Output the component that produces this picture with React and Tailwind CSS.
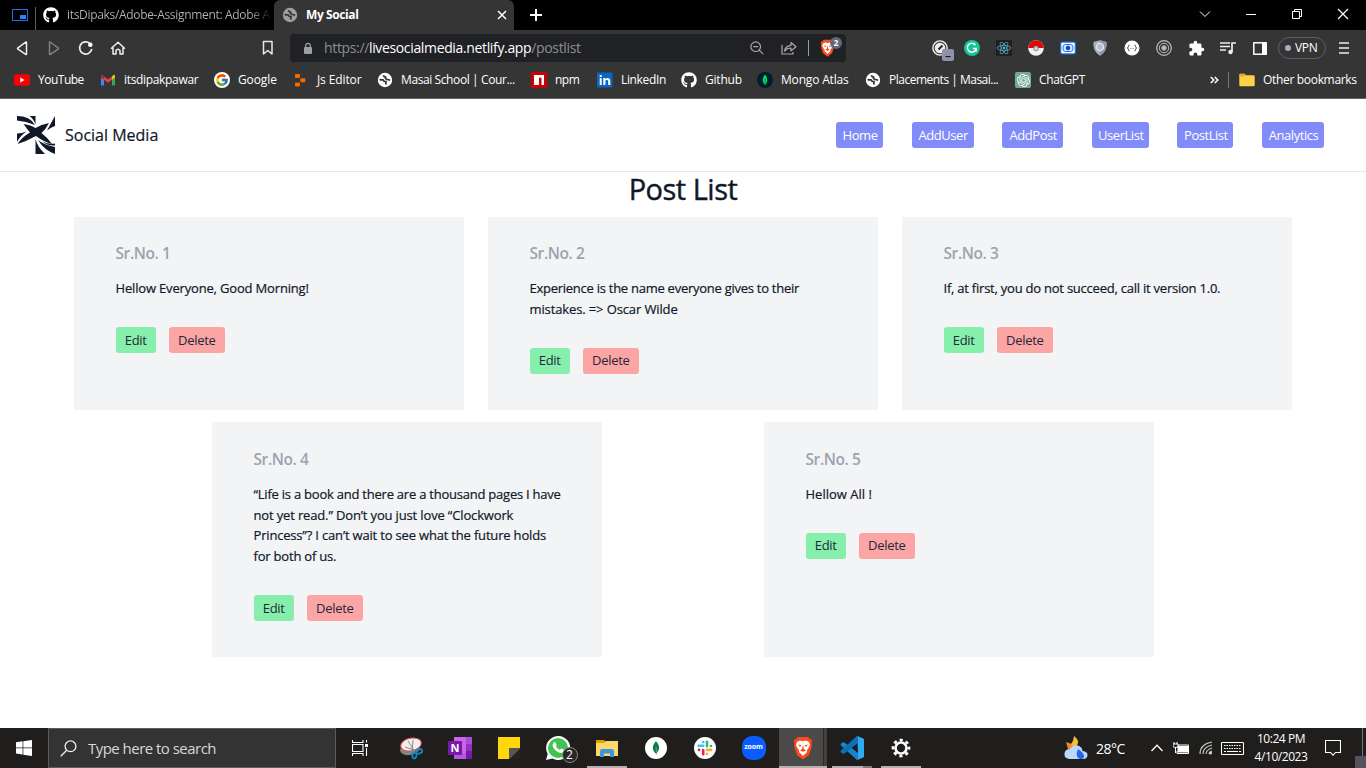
import React from "react";
import { FaGithub, FaReact, FaWhatsapp } from "react-icons/fa";
import { MdExtension } from "react-icons/md";
import { FcGoogle } from "react-icons/fc";
import { SiMongodb, SiOpenai } from "react-icons/si";

const Globe = ({ className, fg, bg }) => (
  <svg viewBox="0 0 16 16" className={className}>
    <circle cx="8" cy="8" r="7.2" fill={fg} />
    <path d="M2.600 7.200Q4 8.200 6 7.900Q6.800 9.800 9 9.700Q8.300 11.500 9.600 12.200" fill="none" stroke={bg} strokeWidth="1.700" />
    <path d="M6.500 3.200Q6.800 5.600 9.200 4.900Q7.400 6.300 9.800 7.300L13.200 8.200" fill="none" stroke={bg} strokeWidth="1.700" />
  </svg>
);

const BraveLion = ({ className }) => (
  <svg viewBox="0 0 20 24" className={className}>
    <path d="M5 1h10l2 2 2 1-.5 4 .5 2-3 9-6 4.500L4 19 1 10l.5-2L1 4l2-1z" fill="#fb4a1e" />
    <path d="M4 6l3-1.500 3 .8 3-.8L16 6l1 3-2 4-1 1v2l-4 4-4-4v-2l-1-1-2-4z" fill="#fff" />
    <path d="M5 8.500l3.500.8L7 11zM15 8.500l-3.500.8L13 11zM10 9l1 4 2 1.500-3 1.200-3-1.200L9 13z" fill="#fb4a1e" />
  </svg>
);

const YouTube = () => (
  <svg viewBox="0 0 16 16" className="size-4 shrink-0"><rect y="2.3" width="16" height="11.4" rx="3" fill="#f00" /><path d="M6.3 5.6v4.8L10.6 8z" fill="#fff" /></svg>
);
const Gmail = () => (
  <svg viewBox="0 0 16 16" className="size-4 shrink-0">
    <path d="M1 4v9.500h3V7z" fill="#4285f4" /><path d="M15 4v9.500h-3V7z" fill="#34a853" />
    <path d="M12 4.5v3.3L15 5.5V4q0-1.6-1.7-1z" fill="#fbbc04" /><path d="M4 4.5v3.3L1 5.5V4q0-1.6 1.7-1z" fill="#c5221f" />
    <path d="M4 4.400v3.400l4 3 4-3V4.400l-4 3z" fill="#ea4335" />
  </svg>
);
const GoogleIcon = () => (
  <span className="flex size-4 shrink-0 items-center justify-center rounded-full bg-white"><FcGoogle className="size-[14px]" /></span>
);
const JsEditor = () => (
  <svg viewBox="0 0 16 16" className="size-4 shrink-0" fill="#f56a00"><rect x="2" y="2" width="5" height="4" rx="1" /><rect x="7.3" y="6.2" width="5" height="4" rx="1" /><rect x="2" y="10.400" width="5" height="4" rx="1" /></svg>
);
const Npm = () => (
  <svg viewBox="0 0 16 16" className="size-4 shrink-0"><rect width="16" height="16" fill="#cb0000" /><path d="M3 3h10v10h-2.500V5.700H8V13H3z" fill="#fff" /></svg>
);
const LinkedIn = () => (
  <svg viewBox="0 0 16 16" className="size-4 shrink-0"><rect y=".5" width="15.500" height="15" rx="1" fill="#0a66c2" /><path d="M2.700 6h2v7h-2zM2.700 3h2v2h-2zM6.300 6h2v1q2.200-2.200 4.500 0 .5.800.5 2v4h-2.100V9.300q-.3-1.700-1.600-1.500-1.200.2-1.200 1.700V13H6.300z" fill="#fff" /></svg>
);
const MongoIcon = () => (
  <span className="flex size-4 shrink-0 items-center justify-center rounded-full bg-[#001e2b]"><svg viewBox="0 0 16 16" className="size-4"><path d="M8 2.500Q12.500 8 8 13Q3.500 8 8 2.500z" fill="#00ed64" /><path d="M8 6v7.500" stroke="#00684a" strokeWidth=".8" /></svg></span>
);
const ChatGpt = () => (
  <span className="flex size-4 shrink-0 items-center justify-center rounded-[2px] bg-[#74aa9c]"><SiOpenai className="size-[13px] text-white" /></span>
);
const Folder = () => (
  <svg viewBox="0 0 16 16" className="size-4 shrink-0"><path d="M.3 3q0-1.300 1.300-1.300h3.900l1.500 1.500h7.200q1.500 0 1.500 1.300v8.700q0 1-1 1H1.300q-1 0-1-1z" fill="#ffd04c" /><path d="M.3 4.500h5.200L7 3.200H5.500L4.500 1.700H1.600Q.3 1.700.3 3z" fill="#e5a820" /></svg>
);

const bookmarks = [
  ["YouTube", <YouTube />, "w-[86px]", "tracking-[-0.5px]"],
  ["itsdipakpawar", <Gmail />, "w-[114px]", "tracking-[-0.33px]"],
  ["Google", <GoogleIcon />, "w-[79px]", "tracking-[-0.1px]"],
  ["Js Editor", <JsEditor />, "w-[84px]", "tracking-[-0.12px]"],
  ["Masai School | Cour...", <Globe className="size-4 shrink-0" fg="#fff" bg="#353535" />, "w-[154px]", "tracking-[-0.4px]"],
  ["npm", <Npm />, "w-[66px]", "tracking-[-0.5px]"],
  ["LinkedIn", <LinkedIn />, "w-[84px]", "tracking-[-0.35px]"],
  ["Github", <FaGithub className="size-4 shrink-0 text-white" />, "w-[76px]", "tracking-[-0.2px]"],
  ["Mongo Atlas", <MongoIcon />, "w-[108px]", "tracking-[-0.18px]"],
  ["Placements | Masai...", <Globe className="size-4 shrink-0" fg="#fff" bg="#353535" />, "w-[150px]", "tracking-[-0.5px]"],
  ["ChatGPT", <ChatGpt />, "w-[86px]", "tracking-[-0.35px]"],
];

const TabStrip = () => (
  <div className="flex h-[30px] bg-black text-[12px]">
    <div className="flex w-[35px] items-center pl-3">
      <svg viewBox="0 0 16 12" className="h-3 w-4"><rect x=".5" y=".5" width="15" height="11" fill="none" stroke="#1a73e8" /><rect x="8" y="6" width="6" height="4" fill="#2f80f5" /></svg>
    </div>
    <div className="mt-[7px] h-[23px] w-px bg-[#5c5c5c]" />
    <div className="flex w-[238px] items-center gap-2 pl-[7px]">
      <FaGithub className="size-4 shrink-0 text-white" />
      <span className="whitespace-nowrap bg-gradient-to-r from-[#b4b4b4] from-90% to-[#111] bg-clip-text tracking-[-0.32px] text-transparent">itsDipaks/Adobe-Assignment: Adobe A</span>
    </div>
    <div className="flex w-[240px] items-center rounded-t-md bg-[#353535] pl-2 text-white">
      <Globe className="size-4" fg="#9aa0a6" bg="#353535" />
      <span className="ml-2 flex-1 font-bold tracking-[-0.4px]">My Social</span>
      <svg viewBox="0 0 10 10" className="mr-[7px] size-[10px]" stroke="#fff" strokeWidth="1.500"><path d="M1 1l8 8M9 1l-8 8" /></svg>
    </div>
    <div className="flex flex-1 items-center pl-4">
      <svg viewBox="0 0 12 12" className="size-3" stroke="#fff" strokeWidth="2"><path d="M6 0v12M0 6h12" /></svg>
    </div>
    <div className="flex w-[184px] items-center pb-[2px]">
      <svg viewBox="0 0 46 12" className="h-3 w-[46px]" fill="none" stroke="#fff"><path d="M18 3.500l5 5 5-5" /></svg>
      <svg viewBox="0 0 46 12" className="h-3 w-[46px]" fill="none" stroke="#fff"><path d="M18 6.500h10" /></svg>
      <svg viewBox="0 0 46 12" className="h-3 w-[46px]" fill="none" stroke="#fff"><path d="M18.500 3.500h7v7h-7zM20.500 3.500v-2h7v7h-2" /></svg>
      <svg viewBox="0 0 46 12" className="h-3 w-[46px]" fill="none" stroke="#fff" strokeWidth="1.200"><path d="M18 1l10 10M28 1l-10 10" /></svg>
    </div>
  </div>
);

const Ext = ({ children }) => <div className="flex w-8 items-center justify-center">{children}</div>;

const Toolbar = () => (
  <div className="flex h-9 items-center">
    <svg viewBox="0 0 128 36" className="h-9 w-32 shrink-0" fill="none" strokeLinejoin="round">
      <path d="M26.500 12.500v11.500q0 .8-.8.400L18 19.200q-1-.7 0-1.400l7.700-5.600q.8-.5.8.3z" stroke="#eee" strokeWidth="1.500" />
      <path d="M49.500 12.500v11.500q0 .8.800.400L58 19.200q1-.7 0-1.400l-7.700-5.600q-.8-.5-.8.300z" stroke="#858585" strokeWidth="1.400" />
      <path d="M89.600 13.200a6.100 6.100 0 1 0 2 6.300" stroke="#eee" strokeWidth="1.700" strokeLinecap="round" /><circle cx="90.300" cy="14.700" r="2.300" fill="#fff" />
      <path d="M111.500 18.200l6.500-6 6.500 6M113 17.500v6.500h3v-3.500q2-2.500 4 0V24h3v-6.500" stroke="#eee" strokeWidth="1.500" strokeLinecap="round" />
    </svg>
    <div className="flex w-[162px] shrink-0 justify-end pr-4">
      <svg viewBox="0 0 12 16" className="h-4 w-3" fill="none" stroke="#e8e8e8" strokeWidth="1.500" strokeLinejoin="round"><path d="M1.500 1.500h8.500v12.500l-4.200-3.500-4.300 3.500z" /></svg>
    </div>
    <div className="flex h-7 w-[556px] shrink-0 items-center rounded-[4px] bg-[#202124] text-[14px]">
      <svg viewBox="0 0 10 12" className="ml-[13px] h-[13px] w-[10px]"><rect x="1" y="4.500" width="8" height="7" rx="1" fill="#9aa0a6" /><path d="M2.700 5V3.200a2.300 2.300 0 0 1 4.600 0V5" fill="none" stroke="#9aa0a6" strokeWidth="1.300" /></svg>
      <span className="ml-[11px] flex-1 whitespace-nowrap pb-px tracking-[-0.35px] text-[#8b8e92]">https://<span className="text-white">livesocialmedia.netlify.app</span>/postlist</span>
      <svg viewBox="0 0 14 14" className="size-[14px]" fill="none" stroke="#aaa" strokeWidth="1.200"><circle cx="5.700" cy="5.700" r="4.800" /><path d="M3.300 5.700h4.800M9.200 9.200l4 4" /></svg>
      <svg viewBox="0 0 16 14" className="ml-[17px] h-[14px] w-4" fill="none" stroke="#aaa" strokeWidth="1.200"><path d="M1 4v9h11v-2M3.500 10q1-5.500 6.500-5.700V1.500l5 4.200-5 4.200V7Q6 7 3.500 10z" strokeLinejoin="round" /></svg>
      <div className="ml-[11px] h-4 w-px bg-[#999]" />
      <div className="relative ml-[11px] mr-1 w-[22px]">
        <BraveLion className="h-[18px] w-[15px]" />
        <span className="absolute -top-[2px] left-[10px] flex size-3 items-center justify-center rounded-full bg-[#666876] text-[8px] font-bold text-white">2</span>
      </div>
    </div>
    <div className="w-[78px]" />
    <div className="flex h-9 shrink-0 items-center">
      <div className="relative flex w-8 items-center justify-center">
        <svg viewBox="0 0 16 16" className="size-4"><circle cx="8" cy="8" r="7.800" fill="#eee" /><circle cx="8" cy="8" r="5.800" fill="none" stroke="#444" strokeWidth="1.200" /><path d="M6.500 9.500l4-4" stroke="#222" strokeWidth="2" /></svg>
        <span className="absolute left-[18px] top-[9px] flex h-3 w-3 items-center justify-center rounded-[2px] bg-[#8f91a8] pt-[2px] text-[8px] font-bold text-black">--</span>
      </div>
      <Ext><svg viewBox="0 0 16 16" className="size-4"><circle cx="8" cy="8" r="8" fill="#15c39a" /><path d="M11.500 5A4.500 4.500 0 1 0 12.300 8.500H9M12.200 8.300v3.200" fill="none" stroke="#fff" strokeWidth="1.500" /></svg></Ext>
      <Ext><span className="flex size-4 items-center justify-center bg-[#202020]"><FaReact className="size-[14px] text-[#53c1de]" /></span></Ext>
      <Ext><svg viewBox="0 0 16 16" className="size-4"><circle cx="8" cy="8" r="7.800" fill="#f2f2f2" /><path d="M.2 8a7.800 7.800 0 0 1 15.600 0z" fill="#dc0b0b" /><circle cx="8" cy="8.500" r="2.700" fill="#999" /><circle cx="8" cy="8.500" r="1.500" fill="#ddd" /></svg></Ext>
      <Ext><svg viewBox="0 0 16 16" className="size-4"><rect y="1.500" width="16" height="13" rx="2" fill="#1976e8" /><rect x="1.300" y="2.800" width="13.400" height="10.400" rx="1" fill="#fff" /><rect x="3" y="4.500" width="10" height="7" rx="2.500" fill="#dce9ff" stroke="#1d6de0" /><circle cx="8" cy="8" r="2.300" fill="#1b44cf" /></svg></Ext>
      <Ext><svg viewBox="0 0 16 16" className="size-4"><path d="M8 .2l6.500 1.800q1 9.500-6.500 13.800Q.5 11.500 1.500 2z" fill="#a9b1c2" /><path d="M8 .2v15.600Q15.500 11.500 14.500 2z" fill="#8d96aa" /><circle cx="8" cy="7" r="3.600" fill="#b7bece" stroke="#e2e6ee" strokeWidth="1.300" /></svg></Ext>
      <Ext><svg viewBox="0 0 16 16" className="size-4"><circle cx="8" cy="8" r="7.500" fill="#fff" /><path d="M5.500 5q-1 0-1 1.300T3.300 8q1.200.3 1.200 1.700T5.500 11M10.500 5q1 0 1 1.300T12.700 8q-1.200.3-1.200 1.700T10.500 11M6.500 8.400h.8M8.700 8.400h.8" stroke="#444" fill="none" /></svg></Ext>
      <Ext><svg viewBox="0 0 16 16" className="size-4" fill="none" stroke="#bbb"><circle cx="8" cy="8" r="7.300" strokeWidth="1.200" /><circle cx="8" cy="8" r="4.700" /><circle cx="8" cy="8" r="2.200" fill="#bbb" /></svg></Ext>
      <Ext><MdExtension className="size-[17px] text-white" /></Ext>
      <Ext><svg viewBox="0 0 16 14" className="h-[14px] w-4" stroke="#eee" strokeWidth="1.700" fill="none"><path d="M0 2h10M0 5.500h10M0 9h6M12 11V2h4" /><circle cx="10.500" cy="11" r="2.200" fill="#eee" stroke="none" /></svg></Ext>
      <Ext><svg viewBox="0 0 14 13" className="h-[13px] w-[14px]"><rect x=".8" y=".8" width="12.400" height="11.400" fill="none" stroke="#fff" strokeWidth="1.500" /><path d="M9 1h4.500v11H9z" fill="#fff" /></svg></Ext>
      <div className="ml-[2px] flex h-[22px] w-12 items-center gap-1 rounded-full border border-[#5e5c74] pl-[6px] text-[12px] text-white"><span className="size-[6px] rounded-full bg-[#a9abc0]" /><span className="tracking-[-0.3px]">VPN</span></div>
      <svg viewBox="0 0 10 12" className="ml-[13px] h-3 w-[10px]" stroke="#eee" strokeWidth="1.700"><path d="M0 1h10M0 6h10M0 11h10" /></svg>
    </div>
  </div>
);

const Bookmarks = () => (
  <div className="flex h-[32px] items-center pb-1 pl-[14px] text-[12px] text-white">
    {bookmarks.map(([t, icon, w, tr]) => (
      <div key={t} className={"flex h-7 shrink-0 items-center gap-2 whitespace-nowrap " + w}>
        {icon}<span className={tr}>{t}</span>
      </div>
    ))}
    <div className="flex flex-1 items-center justify-end pr-[10px]">
      <svg viewBox="0 0 9 8" className="h-2 w-[9px]" fill="none" stroke="#fff" strokeWidth="1.500"><path d="M.8 1l3 3-3 3M4.800 1l3 3-3 3" /></svg>
      <div className="ml-[9px] h-4 w-px bg-[#777]" />
      <div className="ml-[10px] flex w-[117px] items-center gap-2 whitespace-nowrap"><Folder /><span className="tracking-[-0.32px]">Other bookmarks</span></div>
    </div>
  </div>
);

const navItems = [["Home", "w-[47px]"], ["AddUser", "w-[62px]"], ["AddPost", "w-[61px]"], ["UserList", "w-[57px]"], ["PostList", "w-[56px]"], ["Analytics", "w-[62px]"]];

const SiteNav = () => (
  <header className="flex h-[73px] items-center justify-between border-b border-gray-200 pl-[17px] pr-[42px]">
    <div className="flex items-center gap-[10px]">
      <svg viewBox="0 0 38 38" className="size-[38px]" fill="#111827">
        <path d="M6.500 8Q14 9 18.500 12Q24 8.500 32 7Q29 13 24.500 17Q31 22 35 28Q27 26 19 20Q10 25 .5 28Q5 21 13 16.500Q10 13 6.500 8z" />
        <path d="M0 0Q13 0 18 9Q9 5 0 4.500z" /><path d="M12.500 0H18.500V8.500Q17 3.500 12.500 0z" />
        <path d="M38 0V10Q34 11 30 14.500Q34 7 38 0z" /><path d="M0 17.500Q5 17.500 9.500 15.500Q3 20 0 26z" />
        <path d="M18.500 23Q20.500 31 28 38H18.500z" /><path d="M21 24Q27 29 38 31V38Q27 34 21 24z" />
        <path d="M25.500 25.500Q31 28.500 38 27.500V29.500Q30 30 25.500 25.500z" />
      </svg>
      <span className="text-[16px] text-gray-900 [-webkit-text-stroke:0.2px]">Social Media</span>
    </div>
    <nav className="flex gap-[28.600px] text-[13px] tracking-[-0.45px] text-white">
      {navItems.map(([t, w]) => <a key={t} className={"flex h-[26px] items-center justify-center rounded-[3px] bg-[#818cf8] pl-px pt-px " + w}>{t}</a>)}
    </nav>
  </header>
);

const Card = ({ n, lines, top = "pt-[26px]", gap = "mt-[14px]" }) => (
  <article className={"w-[390px] bg-[#f3f4f6] pl-[41.500px] " + top}>
    <h2 className="text-[15.500px] font-semibold leading-[21px] tracking-[-0.4px] text-[#9ca3af]">Sr.No. {n}</h2>
    <div className={"text-[13px] leading-[20.800px] text-gray-900 [-webkit-text-stroke:0.2px] " + gap}>
      {lines.map(([t, tr]) => <p key={t} className={"whitespace-nowrap " + tr}>{t}</p>)}
    </div>
    <div className="mt-[28px] flex gap-[13px] text-[13px] tracking-[-0.3px] text-gray-800">
      <button className="h-[26px] w-[40.500px] rounded-[3px] bg-[#86efac] pt-px">Edit</button>
      <button className="h-[26px] w-[55.500px] rounded-[3px] bg-[#fca5a5] pt-px">Delete</button>
    </div>
  </article>
);

const Main = () => (
  <main className="h-[556px]">
    <h1 className="h-[45px] text-center text-[29px] leading-[34px] tracking-[-0.5px] text-gray-900 [-webkit-text-stroke:0.4px]">Post List</h1>
    <div className="grid h-[193px] grid-cols-3 gap-6 px-[74px]">
      <Card n={1} lines={[["Hellow Everyone, Good Morning!", "tracking-[-0.17px]"]]} />
      <Card n={2} lines={[["Experience is the name everyone gives to their", "tracking-[-0.26px]"], ["mistakes. => Oscar Wilde", "tracking-[-0.12px]"]]} />
      <Card n={3} lines={[["If, at first, you do not succeed, call it version 1.0.", "tracking-[-0.23px]"]]} />
    </div>
    <div className="mt-3 flex h-[235px] justify-center gap-[162px]">
      <Card n={4} top="pt-[27px]" gap="mt-[13.800px]" lines={[["“Life is a book and there are a thousand pages I have", "tracking-[-0.23px]"], ["not yet read.” Don’t you just love “Clockwork", "tracking-[-0.15px]"], ["Princess”? I can’t wait to see what the future holds", "tracking-[-0.18px]"], ["for both of us.", "tracking-[-0.2px]"]]} />
      <Card n={5} top="pt-[27px]" gap="mt-[13.800px]" lines={[["Hellow All !", "tracking-normal"]]} />
    </div>
  </main>
);

const Cell = ({ children, bar }) => (
  <div className="flex h-10 w-[49px] shrink-0 flex-col items-center">
    <div className="flex h-[38px] items-center justify-center pt-[2px]">{children}</div>
    {bar && <div className="h-[2px] w-10 bg-[#b5b0ad]" />}
  </div>
);

const Taskbar = () => (
  <footer className="flex h-10 bg-[#1f1e1d] text-white">
    <div className="flex w-12 items-center justify-center"><svg viewBox="0 0 16 16" className="size-4" fill="#fff"><path d="M0 2.200l6.600-.9v6.200H0zM7.300 1.200L16 0v7.500H7.300zM0 8.200h6.600v6.300L0 13.600zM7.300 8.200H16V16l-8.700-1.300z" /></svg></div>
    <div className="flex w-[288px] items-center border border-[#5b5b5b] bg-[#333] pl-[11px]">
      <svg viewBox="0 0 17 17" className="size-[17px]" fill="none" stroke="#eee" strokeWidth="1.300"><circle cx="10.500" cy="6.300" r="5.400" /><path d="M6.700 10.200L.7 16.300" /></svg>
      <span className="ml-[11px] whitespace-nowrap text-[15px] tracking-[-0.53px] text-[#d8d8d8]">Type here to search</span>
    </div>
    <div className="flex w-[50px] items-center justify-center pr-[2px]"><svg viewBox="0 0 16 16" className="size-4" fill="none" stroke="#fff" strokeWidth="1.100"><path d="M.5 0v2.500h10.500V0M.5 16v-2.500h10.500V16M.5 4.500h10.500v7H.5zM14.500 0v2.500M14.500 8v8" /><path d="M13 4h3v3h-3z" fill="#fff" stroke="none" /></svg></div>
    <Cell><svg viewBox="0 0 24 24" className="size-6"><ellipse cx="11" cy="13" rx="10" ry="6" fill="#858585" transform="rotate(-12 11 13)" /><ellipse cx="12" cy="8.500" rx="10.500" ry="6.300" fill="#f3eeee" stroke="#d44b50" transform="rotate(-12 12 8.500)" /><path d="M9 5l7 11M14 4l-1 12M6 11l9 3" stroke="#888" /><g fill="none" stroke="#1684c8" strokeWidth="1.800"><ellipse cx="20" cy="15.500" rx="3.500" ry="2" transform="rotate(-15 20 15.500)" /><ellipse cx="15.500" cy="19.500" rx="2" ry="3" transform="rotate(15 15.500 19.500)" /></g></svg></Cell>
    <Cell><svg viewBox="0 0 24 24" className="size-6"><path d="M6 1h18v22H6z" fill="#ca64ea" /><path d="M18 1h6v7h-6z" fill="#ae4bd5" /><path d="M18 8h6v7h-6z" fill="#9332bf" /><path d="M6 17h12v6H6z" fill="#b558da" /><path d="M18 15h6v8h-6z" fill="#7719aa" /><rect y="5" width="14" height="14" rx="1" fill="#7719aa" /><text x="7" y="16" fontFamily="Open Sans, sans-serif" fontWeight="700" fontSize="11" textAnchor="middle" fill="#fff">N</text></svg></Cell>
    <Cell><svg viewBox="0 0 22 22" className="size-[22px]"><path d="M0 0h22v12L12 22H0z" fill="#ffd60a" /><path d="M11 11h11L11 22z" fill="#555" /><path d="M22 11v11H11z" fill="#242424" /></svg></Cell>
    <Cell><div className="relative size-6"><svg viewBox="0 0 24 24" className="size-6"><path d="M12 0a12 12 0 0 0-10.300 18L0 24l6.300-1.600A12 12 0 1 0 12 0z" fill="#fff" /><circle cx="12" cy="12" r="10" fill="#40c351" /><path d="M7.800 6.500q1-1 1.800 0l1 2.300q.2.600-.8 1.500 1.200 2.500 4 3.600l1.200-1.200q.4-.3.900 0l2.200 1.100q.5 1.700-1.200 2.700-2 1-5-.6-3.400-1.900-5-5-1-2.600.9-4.400z" fill="#fff" /></svg><span className="absolute left-4 top-[11px] flex size-4 items-center justify-center rounded-full border border-[#888] bg-[#292827] text-[12px]">2</span></div></Cell>
    <Cell bar><svg viewBox="0 0 22 20" className="h-5 w-[22px]"><path d="M0 2h8l2 2h11.500v14H0z" fill="#dba400" /><path d="M0 5h8l2-2h12v15H0z" fill="#ffd768" /><path d="M4 19v-6q0-2 2-2h10q2 0 2 2v6h-4v-3.500H8V19z" fill="#3b98e0" /></svg></Cell>
    <Cell><span className="flex size-[22px] items-center justify-center rounded-full bg-white"><SiMongodb className="size-[14px] text-[#0a7d43]" /></span></Cell>
    <Cell><svg viewBox="0 0 22 22" className="size-[22px]"><circle cx="11" cy="11" r="11" fill="#fff" /><g strokeWidth="2.600" strokeLinecap="round"><path d="M9.200 8.800H4.600M9.200 5v.1" stroke="#36c5f0" /><path d="M13 4.800v4.300M16.900 9h.1" stroke="#2eb67d" /><path d="M13 12.900h4.200M13 16.900v.1" stroke="#ecb22e" /><path d="M9.200 13v4.200M5 12.900h.1" stroke="#e01e5a" /></g></svg></Cell>
    <Cell><span className="flex size-6 items-center justify-center rounded-[10px] bg-[#0b5cff] pb-px text-[7px] font-bold tracking-[-0.1px]">zoom</span></Cell>
    <div className="ml-px flex h-10 w-12 shrink-0 flex-col justify-between bg-[linear-gradient(to_right,#4b4a49_0_44px,#2c2b2a_44px_45px,#434241_45px)]">
      <div className="flex h-[38px] w-full items-center justify-center pt-[2px]"><BraveLion className="h-6 w-5" /></div>
      <div className="h-[2px] bg-[#b5b0ad]" />
    </div>
    <div className="flex h-10 w-[49px] shrink-0 flex-col items-center">
      <div className="flex h-[38px] items-center pt-[2px]"><svg viewBox="0 0 24 24" className="size-6"><path d="M17 0l7 3v18l-7 3L1 9.500q-1-1 0-2L2.500 6.500q1-.6 2 .1L18 17z" fill="#1684cf" /><path d="M17 0L1 14.500q-1 1 0 2l1.500 1q1 .6 2-.1L18 7z" fill="#0c71b8" /><path d="M17 0l7 3v18l-7 3q1-.6 1-2V2q0-1.300-1-2z" fill="#2eabf1" /></svg></div>
      <div className="h-[2px] w-10 bg-[linear-gradient(to_right,#b5b0ad_0_31px,#7d7977_31px)]" />
    </div>
    <Cell bar><svg viewBox="0 0 20 20" className="size-5" fill="none" stroke="#fff"><circle cx="10" cy="10" r="5.500" strokeWidth="2.600" /><circle cx="10" cy="10" r="8" strokeWidth="2.700" strokeDasharray="3.140 3.140" strokeDashoffset="1.570" /></svg></Cell>
    <div className="flex flex-1 items-center justify-end">
      <svg viewBox="0 0 24 24" className="size-6"><path d="M10 0q6 4 3 10Q9 14 4 9q5 0 6-9z" fill="#f7bd38" /><path d="M2 6q8 2 8 8l-6-1z" fill="#f58b1e" /><path d="M5 23q-5-1-4.500-5.500Q1 13 6 13q2-4 7-3.500 5 .5 5.500 5.500 5.500.5 5 4.500-.5 3.500-4.500 3.500z" fill="#bcd7fa" /><path d="M14 13q6 4 6 7t-3 3-4-3 1-7z" fill="#2864e8" /></svg>
      <span className="ml-2 w-[32px] whitespace-nowrap text-[14px] tracking-[-0.5px]">28°C</span>
      <svg viewBox="0 0 12 8" className="ml-[23px] h-2 w-3" fill="none" stroke="#fff" strokeWidth="1.300"><path d="M.5 7L6 1.200 11.500 7" /></svg>
      <svg viewBox="0 0 16 12" className="ml-[10px] h-3 w-4"><path d="M4.500 4H15v6.500H4.500z" fill="#fff" /><path d="M5 3h10.500v8.500H4V9M15.500 5.500v3.500M1 0v2M4 0v2M0 2h5v2.500q-2.500 2.500-5 0zM2.500 5v6" fill="none" stroke="#fff" /></svg>
      <svg viewBox="0 0 14 14" className="ml-[10px] size-[14px]" fill="none" stroke="#ccc" strokeWidth="1.100"><path d="M1 13Q1 3 13 1M4 13Q4 6 13 4M7 13Q7 9 13 7M10 13q0-2 3-3" /><circle cx="11.500" cy="12" r="1" fill="#fff" /></svg>
      <svg viewBox="0 0 23 13" className="ml-2 h-[13px] w-[23px]" fill="none" stroke="#fff"><path d="M.5.500h22v12H.5z" /><path d="M3 3.500h17M3 6.500h17" strokeDasharray="1.500 1" /><path d="M3 9.500h2M6 9.500h11M18 9.500h2" /></svg>
      <div className="ml-[6px] flex w-[62px] flex-col items-center text-[12px] leading-[18px] tracking-[-0.45px]"><span className="whitespace-nowrap">10:24 PM</span><span className="whitespace-nowrap">4/10/2023</span></div>
      <svg viewBox="0 0 16 16" className="ml-[13px] size-4" fill="none" stroke="#fff" strokeWidth="1.100"><path d="M.5.500h15v12h-5L8 15.200 5.500 12.500h-5z" /></svg>
      <div className="ml-[14px] flex h-10 w-[11px] flex-col items-center"><div className="ml-1 h-7 w-px bg-[#777]" /><div className="h-3 w-full bg-[#57515e]" /></div>
    </div>
  </footer>
);

export default function App() {
  return (
    <div className="flex h-[768px] w-[1366px] flex-col overflow-hidden bg-white font-['Open_Sans',sans-serif]">
      <div className="h-[99px] border-b border-[#666] bg-[#353535]">
        <TabStrip /><Toolbar /><Bookmarks />
      </div>
      <SiteNav />
      <Main />
      <Taskbar />
    </div>
  );
}
